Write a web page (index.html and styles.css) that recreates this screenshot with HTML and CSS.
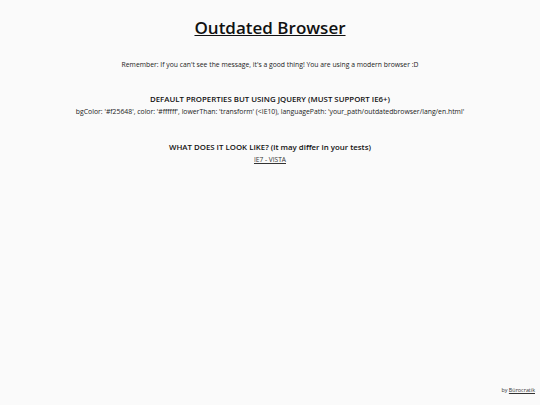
FILE: index.html
```html
<!DOCTYPE html>
<html>
<head>
<meta charset="utf-8">
<link rel="stylesheet" href="styles.css">
</head>
<body>
<div class="page">
  <h1 class="title"><a href="#">Outdated Browser</a></h1>
  <p class="intro">Remember: If you can't see the message, it's a good thing! You are using a modern browser :D</p>
  <section class="block block-first">
    <h2 class="heading">DEFAULT PROPERTIES BUT USING JQUERY (MUST SUPPORT IE6+)</h2>
    <p class="code">bgColor: '#f25648', color: '#ffffff', lowerThan: 'transform' (&lt;IE10), languagePath: 'your_path/outdatedbrowser/lang/en.html'</p>
  </section>
  <section class="block">
    <h2 class="heading">WHAT DOES IT LOOK LIKE? (it may differ in your tests)</h2>
    <p class="links"><a href="#">IE7 - VISTA</a></p>
  </section>
</div>
<footer class="credit">by <a href="#">Bürocratik</a></footer>
</body>
</html>
```
FILE: styles.css
```css
html, body {
  margin: 0;
  padding: 0;
  height: 100%;
}
body {
  background: #fafafa;
  font-family: "Open Sans", "DejaVu Sans", sans-serif;
  color: #111;
  position: relative;
}
.page {
  text-align: center;
  padding-top: 13px;
}
.title {
  margin: 0;
  font-size: 17px;
  font-weight: 600;
  line-height: 30px;
}
.title a {
  color: #111;
  text-decoration: underline;
}
.intro {
  margin: 16px 0 0;
  font-size: 6.8px;
  line-height: 12px;
  color: #222;
}
.block {
  margin-top: 23px;
}
.block-first {
  margin-top: 22px;
}
.heading {
  margin: 0;
  font-size: 7.85px;
  font-weight: 600;
  line-height: 13px;
  color: #111;
}
.code {
  margin: 0;
  font-size: 6.85px;
  line-height: 12px;
  color: #222;
}
.links {
  margin: 0;
  font-size: 6.6px;
  line-height: 12px;
}
.links a {
  color: #333;
}
.credit {
  position: absolute;
  right: 5px;
  bottom: 11px;
  font-size: 5.4px;
  color: #333;
}
.credit a {
  color: #333;
}
```
